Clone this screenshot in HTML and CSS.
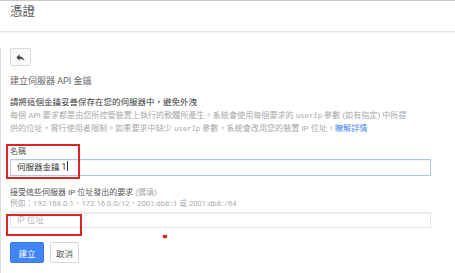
FILE: index.html
```html
<!DOCTYPE html>
<html lang="zh-Hant">
<head>
    <meta charset="UTF-8">
    <title>憑證</title>
    <link rel="stylesheet" href="styles.css">
</head>
<body>
    <div class="topbar">
        <h1>憑證</h1>
    </div>

    <div class="main">
        <button class="back" type="button">
            <svg width="11" height="11" viewBox="0 0 24 24"><path d="M10 9V5l-7 7 7 7v-4.1c5 0 8.5 1.6 11 5.1-1-5-4-10-11-11z" fill="#444"/></svg>
        </button>

        <h2 class="title">建立伺服器 API 金鑰</h2>

        <p class="lead">請將這個金鑰妥善保存在您的伺服器中，避免外洩</p>
        <p class="desc">每個 API 要求都是由您所控管裝置上執行的軟體所產生。系統會使用每個要求的 <code>userIp</code> 參數 (如有指定) 中所提<br>供的位址，實行使用者限制。如果要求中缺少 <code>userIp</code> 參數，系統會改用您的裝置 IP 位址。<a href="#">瞭解詳情</a></p>

        <div class="field">
            <label class="label">名稱</label>
            <div class="input focused">伺服器金鑰 1<span class="caret"></span></div>
        </div>

        <div class="field second">
            <label class="label">接受這些伺服器 IP 位址發出的要求 <span class="optional">(選填)</span></label>
            <div class="hint">例如：192.168.0.1、172.16.0.0/12、2001:db8::1 或 2001:db8::/64</div>
            <div class="input empty">IP 位址</div>
        </div>

        <div class="actions">
            <button class="btn primary" type="button">建立</button>
            <button class="btn" type="button">取消</button>
        </div>
    </div>

    <div class="mark mark-name"></div>
    <div class="mark mark-ip"></div>
    <div class="dot"></div>
</body>
</html>
```

FILE: styles.css
```css
body {
    margin: 0;
    font-family: Roboto, "Noto Sans CJK TC", sans-serif;
    background: #fff;
    color: #444;
    width: 455px;
    height: 273px;
    overflow: hidden;
}
.topbar {
    border-top: 1px solid #c9c9c9;
    border-bottom: 1px solid #e2e2e2;
    box-shadow: 0 1px 0 #f2f2f2;
    height: 32px;
    padding-left: 10px;
    box-sizing: border-box;
}
.topbar h1 {
    margin: 0;
    font-size: 12.5px;
    font-weight: normal;
    line-height: 22px;
    color: #555;
}
.main {
    border-left: 1px solid #dcdcdc;
    padding-left: 9px;
    height: 238px;
}
.back {
    display: flex;
    align-items: center;
    justify-content: center;
    margin-top: 16px;
    width: 21px;
    height: 18px;
    padding: 0;
    border: 1px solid #dadada;
    border-radius: 2px;
    background: #fafafa;
}
.title {
    margin: 9px 0 0 0;
    font-size: 9px;
    font-weight: normal;
    line-height: 12px;
    color: #666;
}
.lead {
    margin: 9px 0 0 0;
    font-size: 8.5px;
    line-height: 12px;
    color: #3a3a3a;
}
.desc {
    margin: 1px 0 0 0;
    font-size: 8.1px;
    line-height: 13px;
    color: #a8a8a8;
    white-space: nowrap;
}
.desc code {
    font-family: "DejaVu Sans Mono", monospace;
    font-size: 7.3px;
}
.desc a {
    color: #4a86e8;
    text-decoration: none;
}
.field {
    margin-top: 12px;
}
.field.second {
    margin-top: 12px;
}
.label {
    display: block;
    font-size: 8px;
    line-height: 10px;
    color: #555;
}
.optional {
    color: #aaa;
}
.hint {
    margin-top: 1px;
    font-size: 7.7px;
    line-height: 10px;
    color: #aaa;
}
.input {
    width: 421px;
    height: 17px;
    margin-top: 2px;
    box-sizing: border-box;
    padding-left: 6px;
    font-size: 8.5px;
    line-height: 15px;
    color: #333;
    border: 1px solid #e4e4e4;
    box-shadow: inset 0 1px 1px #f0f0f0;
}
.input.focused {
    border-color: #a9c5f5;
}
.input.empty {
    margin-top: 3px;
    height: 16px;
    line-height: 14px;
    color: #bbb;
    border: 1px solid #e6e6e6;
}
.caret {
    display: inline-block;
    width: 1px;
    height: 10px;
    margin-left: 1px;
    vertical-align: -1px;
    background: #333;
}
.actions {
    display: flex;
    gap: 6px;
    margin-top: 14px;
}
.btn {
    height: 21px;
    padding: 0 5px;
    font-family: inherit;
    font-size: 8.5px;
    color: #555;
    background: #fff;
    border: 1px solid #d6d6d6;
    border-radius: 2px;
}
.btn.primary {
    width: 34px;
    color: #fff;
    background: #4285f4;
    border-color: #3b78e7;
}
.mark {
    position: absolute;
    border: 2px solid #e02424;
    box-sizing: border-box;
}
.mark-name {
    left: 6px;
    top: 144px;
    width: 74px;
    height: 35px;
}
.mark-ip {
    left: 6px;
    top: 214px;
    width: 76px;
    height: 22px;
}
.dot {
    position: absolute;
    left: 163px;
    top: 235px;
    width: 4px;
    height: 3px;
    background: #e02424;
    box-shadow: 0 0 2px #f4a0a0;
}
```
